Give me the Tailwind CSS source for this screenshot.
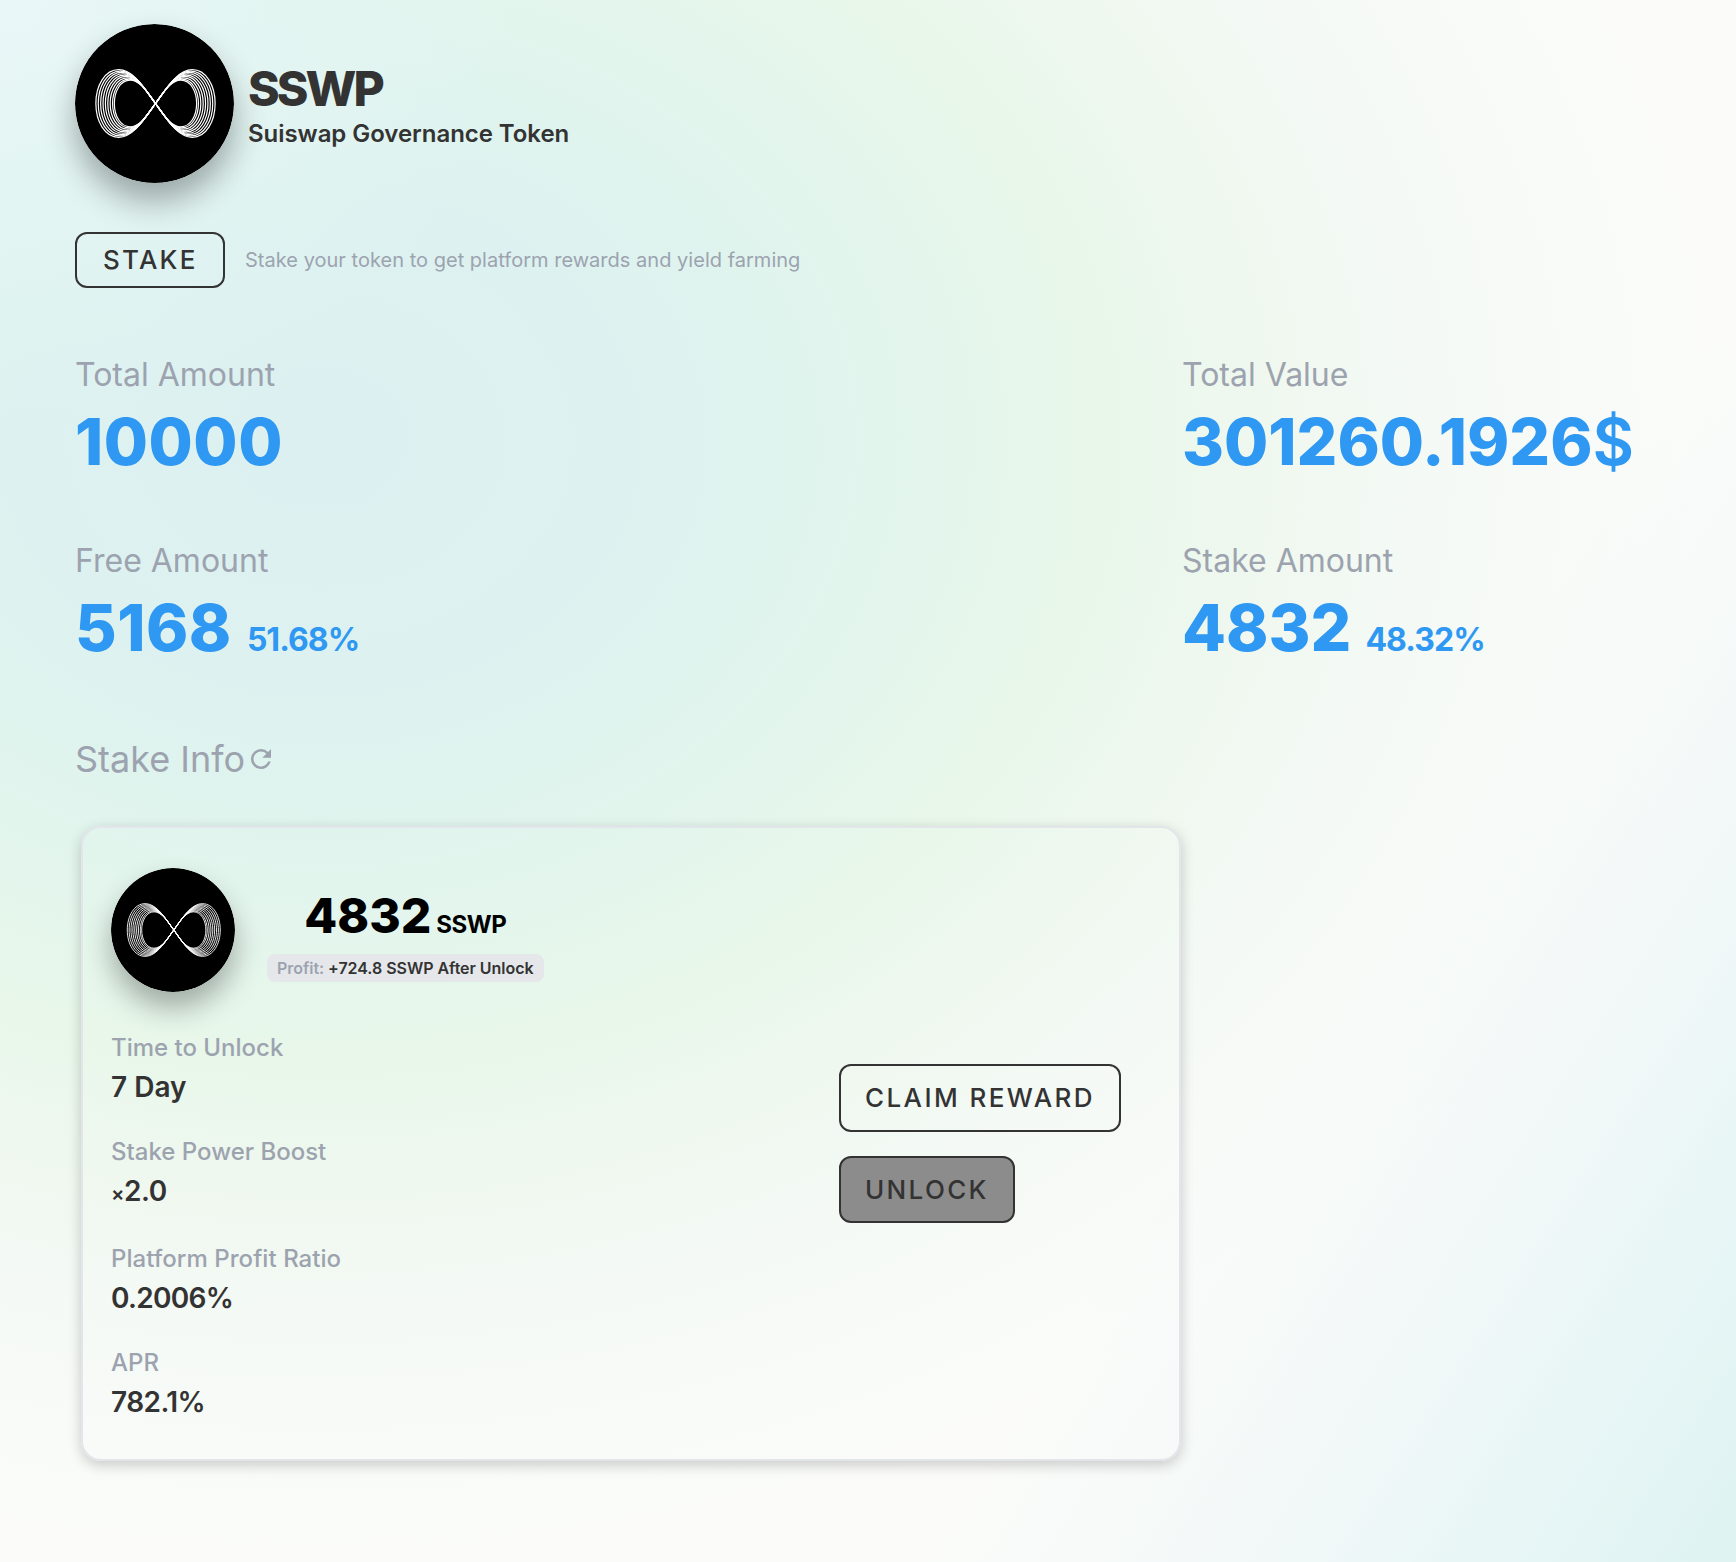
<!DOCTYPE html>
<html lang="en">
<head>
<meta charset="utf-8">
<title>SSWP Stake</title>
<script src="https://cdn.jsdelivr.net/npm/@tailwindcss/browser@4"></script>
</head>
<body class="font-['Inter',sans-serif] text-[#333333]">
<svg class="hidden" xmlns="http://www.w3.org/2000/svg">
  <defs>
    <path id="loop" vector-effect="non-scaling-stroke" d="M0 0C-11-15-22-34-37-34C-51-34-60-18-60 0C-60 18-51 34-37 34C-22 34-11 15 0 0C11-15 22-34 37-34C51-34 60-18 60 0C60 18 51 34 37 34C22 34 11 15 0 0Z"/>
    <symbol id="logo" viewBox="0 0 160 160">
      <circle cx="80" cy="80" r="80" fill="#000"/>
      <g transform="translate(81 80)" fill="none" stroke="#fff">
        <use href="#loop"/>
        <use href="#loop" transform="scale(.96)"/>
        <use href="#loop" transform="scale(.92)"/>
        <use href="#loop" transform="scale(.88)"/>
        <use href="#loop" transform="scale(.84)"/>
        <use href="#loop" transform="scale(.8)"/>
        <use href="#loop" transform="scale(.76)"/>
        <use href="#loop" transform="scale(.72)"/>
        <use href="#loop" transform="scale(.69)"/>
      </g>
    </symbol>
  </defs>
</svg>
<main class="h-[1562px] w-[1736px] overflow-hidden bg-[#fbfcfa] bg-[radial-gradient(ellipse_520px_420px_at_0px_0px,#e9f7f8_0%,#e5f6f5b0_40%,#e2f5f000_100%),linear-gradient(123deg,#f7faf900_70%,#f2f8f8_83%,#e8f6f6_91%,#def3f2_100%),radial-gradient(ellipse_1420px_1130px_at_320px_440px,#dcf0f1_0%,#ddf2f0_22%,#e2f5ed_40%,#e8f7ea_54%,#f0f8f0_68%,#f6faf7_82%,#fbfcfa_100%)] pl-[75px] pt-6">
  <header class="flex h-40">
    <svg class="size-[159px] rounded-full shadow-[0_18px_32px_rgba(0,0,0,0.32)] [stroke-width:1.2]"><use href="#logo"/></svg>
    <div class="ml-3.5 pt-[41px]">
      <h1 class="text-[48px] leading-[48px] font-extrabold tracking-[-0.06em]">SSWP</h1>
      <p class="mt-[5px] text-2xl leading-8 font-semibold tracking-[-0.002em]">Suiswap Governance Token</p>
    </div>
  </header>

  <div class="mt-12 flex items-center">
    <button class="flex h-14 w-[150px] items-center rounded-xl border-2 border-[#333333] pb-0.5 pl-[26px] text-[26px] font-medium tracking-[0.085em]">STAKE</button>
    <p class="ml-5 text-xl tracking-[0.001em] text-[#9ca3af]">Stake your token to get platform rewards and yield farming</p>
  </div>

  <section class="mt-[67px] grid grid-cols-[1107px_1fr] gap-y-[66px] text-[#2e98f2]">
    <div>
      <h2 class="text-[32px] leading-10 text-[#9ca3af]">Total Amount</h2>
      <p class="mt-[15px] mb-px text-[64px] leading-16 font-extrabold tracking-[0.008em]">10000</p>
    </div>
    <div>
      <h2 class="text-[32px] leading-10 text-[#9ca3af]">Total Value</h2>
      <p class="mt-[15px] mb-px text-[64px] leading-16 font-extrabold">301260.1926<span class="font-semibold">$</span></p>
    </div>
    <div>
      <h2 class="text-[32px] leading-10 text-[#9ca3af]">Free Amount</h2>
      <p class="mt-[15px] flex items-baseline text-[64px] leading-16 font-extrabold tracking-[0.008em]">5168<span class="ml-[15px] text-[32px] leading-8 font-bold tracking-[-0.03em]">51.68%</span></p>
    </div>
    <div>
      <h2 class="text-[32px] leading-10 text-[#9ca3af]">Stake Amount</h2>
      <p class="mt-[15px] flex items-baseline text-[64px] leading-16 font-extrabold">4832<span class="ml-3.5 text-[32px] leading-8 font-bold tracking-[-0.03em]">48.32%</span></p>
    </div>
  </section>

  <div class="mt-[79px] flex items-center text-[#9ca3af]">
    <h2 class="text-4xl leading-10">Stake Info</h2>
    <svg class="ml-px size-[30px]" viewBox="0 0 24 24" fill="currentColor"><path d="M17.65 6.35A7.96 7.96 0 0 0 12 4a8 8 0 1 0 7.73 10h-2.08A6 6 0 1 1 12 6c1.66 0 3.14.69 4.22 1.78L13 11h7V4z"/></svg>
  </div>

  <section class="mt-[47px] ml-1.5 h-[635px] w-[1100px] rounded-[20px] border-2 border-[#e2e5ea] px-7 pt-10 shadow-[0_4px_14px_rgba(0,0,0,0.2)]">
    <div class="flex">
      <svg class="size-[124px] rounded-full shadow-[0_16px_28px_rgba(0,0,0,0.3)] [stroke-width:.9]"><use href="#logo"/></svg>
      <div class="ml-8 flex flex-col items-center pt-6">
        <p class="flex items-baseline text-[48px] leading-[48px] font-extrabold text-black">4832<span class="ml-[5px] text-2xl leading-6 font-bold tracking-[-0.02em]">SSWP</span></p>
        <p class="mt-3.5 flex h-7 items-center rounded-lg bg-[#e5e7eb] px-2.5 text-base font-semibold tracking-[-0.002em]"><span class="mr-1 text-[#9ca3af]">Profit:</span>+724.8 SSWP After Unlock</p>
      </div>
    </div>
    <div class="mt-10 flex">
      <dl class="w-[728px] text-[28px] leading-8 font-semibold">
        <dt class="text-2xl leading-8 font-medium text-[#9ca3af]">Time to Unlock</dt>
        <dd class="mt-[7px]">7 Day</dd>
        <dt class="mt-[33px] text-2xl leading-8 font-medium text-[#9ca3af]">Stake Power Boost</dt>
        <dd class="mt-[7px] tracking-[-0.015em]"><span class="text-xl leading-5">×</span>2.0</dd>
        <dt class="mt-9 text-2xl leading-8 font-medium tracking-[0.002em] text-[#9ca3af]">Platform Profit Ratio</dt>
        <dd class="mt-[7px] tracking-[-0.025em]">0.2006%</dd>
        <dt class="mt-[33px] text-2xl leading-8 font-medium text-[#9ca3af]">APR</dt>
        <dd class="mt-[7px] tracking-[-0.02em]">782.1%</dd>
      </dl>
      <div class="flex flex-col gap-6 pt-8 text-[26px] font-medium">
        <button class="flex h-[68px] w-[282px] items-center rounded-xl border-2 border-[#333333] pb-0.5 pl-6 font-medium tracking-[0.093em] whitespace-nowrap">CLAIM REWARD</button>
        <button class="flex h-[67px] w-[176px] items-center rounded-xl border-2 border-[#333333] bg-[#8c8c8c] pl-6 font-medium tracking-[0.09em]">UNLOCK</button>
      </div>
    </div>
  </section>
</main>
</body>
</html>
